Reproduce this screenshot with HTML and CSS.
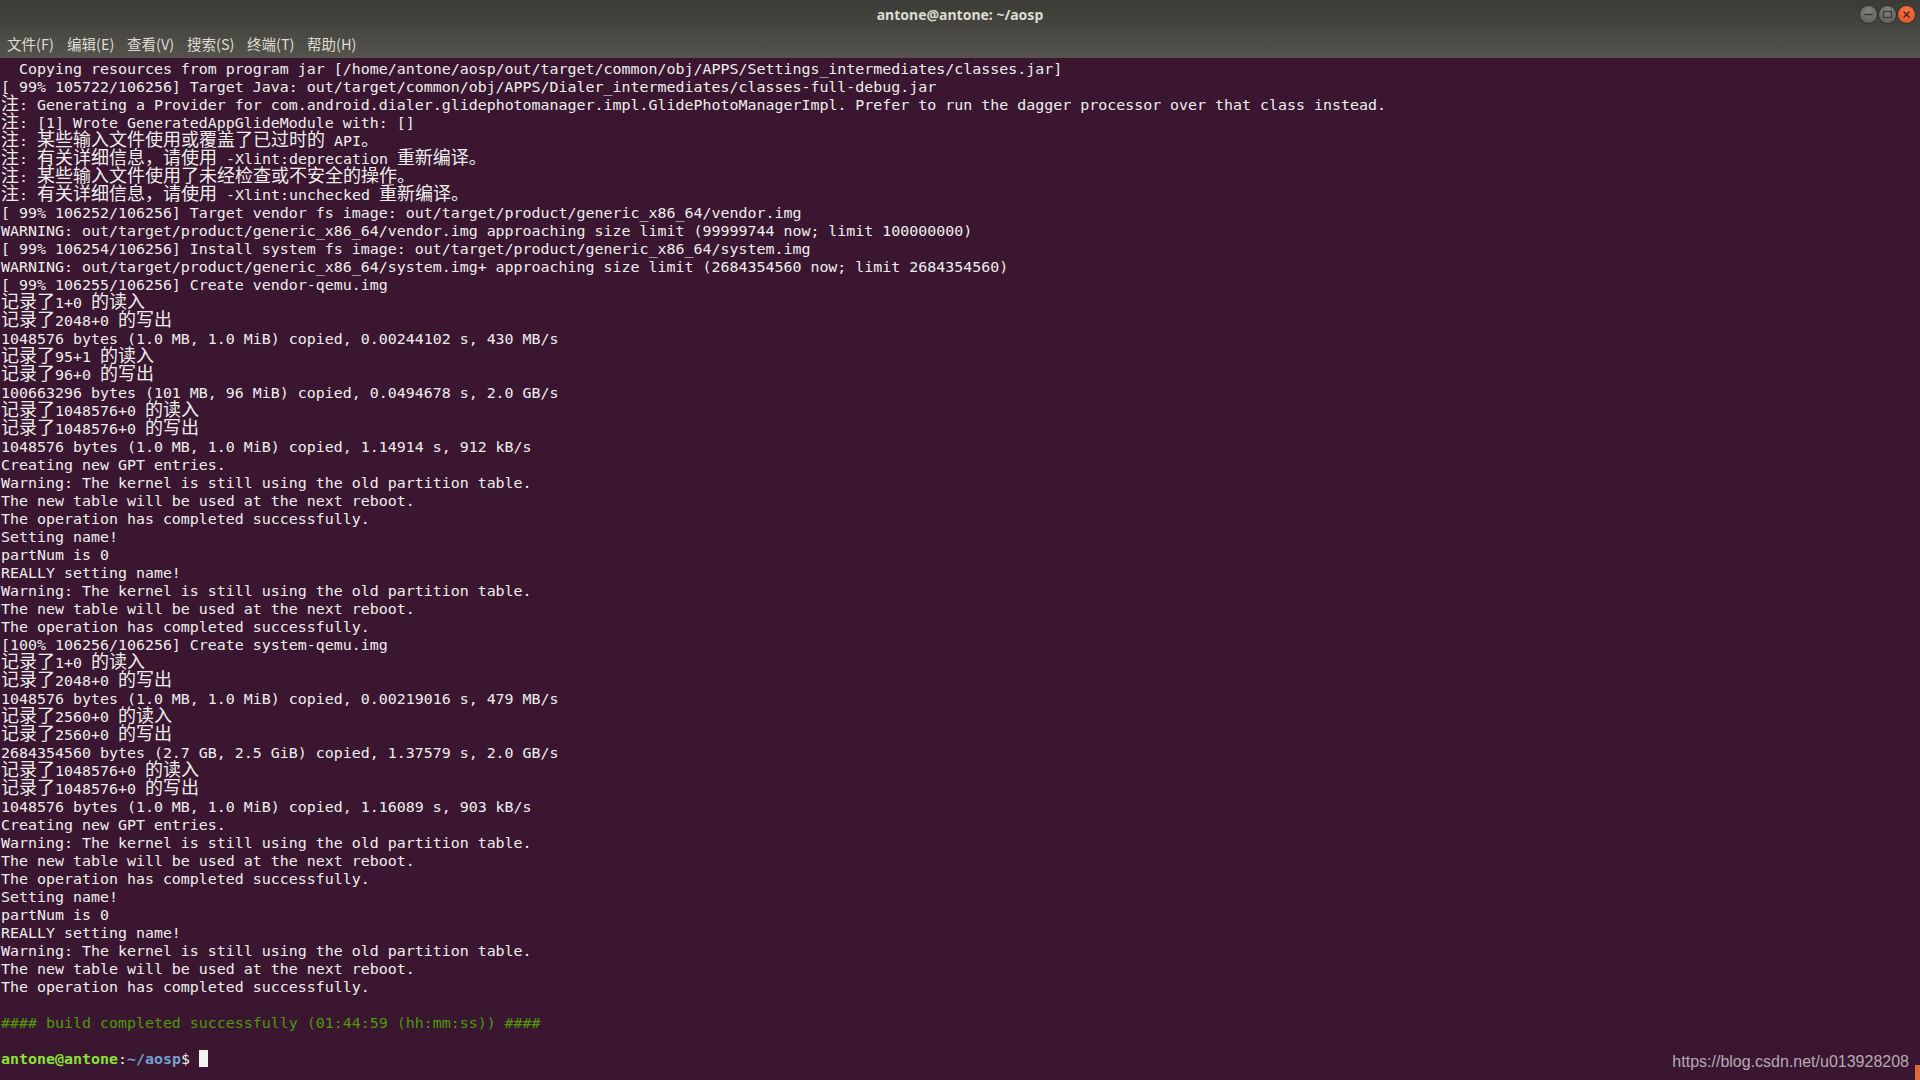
FILE: index.html
```html
<!DOCTYPE html>
<html lang="zh-CN">
<head>
    <meta charset="UTF-8">
    <meta name="viewport" content="width=device-width, initial-scale=1.0">
    <title>antone@antone: ~/aosp</title>
    <link rel="stylesheet" href="styles.css">
</head>
<body>
    <div class="window">
        <div class="chrome">
            <div class="titlebar">
                <div></div>
                <div class="title">antone@antone: ~/aosp</div>
                <div class="controls">
                    <span class="btn">
                        <svg width="17" height="17" viewBox="0 0 17 17"><path d="M4.5 8.5h8" stroke="#3a3935" stroke-width="1.4"/></svg>
                    </span>
                    <span class="btn">
                        <svg width="17" height="17" viewBox="0 0 17 17"><rect x="4.5" y="5.5" width="8" height="6" fill="none" stroke="#3a3935" stroke-width="1.2"/></svg>
                    </span>
                    <span class="btn close">
                        <svg width="17" height="17" viewBox="0 0 17 17"><path d="M5.5 5.5l6 6M11.5 5.5l-6 6" stroke="#3b2418" stroke-width="1.3"/></svg>
                    </span>
                </div>
            </div>
            <div class="menubar">
                <span class="menu">文件(F)</span>
                <span class="menu">编辑(E)</span>
                <span class="menu">查看(V)</span>
                <span class="menu">搜索(S)</span>
                <span class="menu">终端(T)</span>
                <span class="menu">帮助(H)</span>
            </div>
        </div>

        <div class="terminal">
            <div class="ln">  Copying resources from program jar [/home/antone/aosp/out/target/common/obj/APPS/Settings_intermediates/classes.jar]</div>
            <div class="ln">[ 99% 105722/106256] Target Java: out/target/common/obj/APPS/Dialer_intermediates/classes-full-debug.jar</div>
            <div class="ln"><span class="w">注</span>: Generating a Provider for com.android.dialer.glidephotomanager.impl.GlidePhotoManagerImpl. Prefer to run the dagger processor over that class instead.</div>
            <div class="ln"><span class="w">注</span>: [1] Wrote GeneratedAppGlideModule with: []</div>
            <div class="ln"><span class="w">注</span>: <span class="w">某些输入文件使用或覆盖了已过时的</span> API<span class="w">。</span></div>
            <div class="ln"><span class="w">注</span>: <span class="w">有关详细信息，请使用</span> -Xlint:deprecation <span class="w">重新编译。</span></div>
            <div class="ln"><span class="w">注</span>: <span class="w">某些输入文件使用了未经检查或不安全的操作。</span></div>
            <div class="ln"><span class="w">注</span>: <span class="w">有关详细信息，请使用</span> -Xlint:unchecked <span class="w">重新编译。</span></div>
            <div class="ln">[ 99% 106252/106256] Target vendor fs image: out/target/product/generic_x86_64/vendor.img</div>
            <div class="ln">WARNING: out/target/product/generic_x86_64/vendor.img approaching size limit (99999744 now; limit 100000000)</div>
            <div class="ln">[ 99% 106254/106256] Install system fs image: out/target/product/generic_x86_64/system.img</div>
            <div class="ln">WARNING: out/target/product/generic_x86_64/system.img+ approaching size limit (2684354560 now; limit 2684354560)</div>
            <div class="ln">[ 99% 106255/106256] Create vendor-qemu.img</div>
            <div class="ln"><span class="w">记录了</span>1+0 <span class="w">的读入</span></div>
            <div class="ln"><span class="w">记录了</span>2048+0 <span class="w">的写出</span></div>
            <div class="ln">1048576 bytes (1.0 MB, 1.0 MiB) copied, 0.00244102 s, 430 MB/s</div>
            <div class="ln"><span class="w">记录了</span>95+1 <span class="w">的读入</span></div>
            <div class="ln"><span class="w">记录了</span>96+0 <span class="w">的写出</span></div>
            <div class="ln">100663296 bytes (101 MB, 96 MiB) copied, 0.0494678 s, 2.0 GB/s</div>
            <div class="ln"><span class="w">记录了</span>1048576+0 <span class="w">的读入</span></div>
            <div class="ln"><span class="w">记录了</span>1048576+0 <span class="w">的写出</span></div>
            <div class="ln">1048576 bytes (1.0 MB, 1.0 MiB) copied, 1.14914 s, 912 kB/s</div>
            <div class="ln">Creating new GPT entries.</div>
            <div class="ln">Warning: The kernel is still using the old partition table.</div>
            <div class="ln">The new table will be used at the next reboot.</div>
            <div class="ln">The operation has completed successfully.</div>
            <div class="ln">Setting name!</div>
            <div class="ln">partNum is 0</div>
            <div class="ln">REALLY setting name!</div>
            <div class="ln">Warning: The kernel is still using the old partition table.</div>
            <div class="ln">The new table will be used at the next reboot.</div>
            <div class="ln">The operation has completed successfully.</div>
            <div class="ln">[100% 106256/106256] Create system-qemu.img</div>
            <div class="ln"><span class="w">记录了</span>1+0 <span class="w">的读入</span></div>
            <div class="ln"><span class="w">记录了</span>2048+0 <span class="w">的写出</span></div>
            <div class="ln">1048576 bytes (1.0 MB, 1.0 MiB) copied, 0.00219016 s, 479 MB/s</div>
            <div class="ln"><span class="w">记录了</span>2560+0 <span class="w">的读入</span></div>
            <div class="ln"><span class="w">记录了</span>2560+0 <span class="w">的写出</span></div>
            <div class="ln">2684354560 bytes (2.7 GB, 2.5 GiB) copied, 1.37579 s, 2.0 GB/s</div>
            <div class="ln"><span class="w">记录了</span>1048576+0 <span class="w">的读入</span></div>
            <div class="ln"><span class="w">记录了</span>1048576+0 <span class="w">的写出</span></div>
            <div class="ln">1048576 bytes (1.0 MB, 1.0 MiB) copied, 1.16089 s, 903 kB/s</div>
            <div class="ln">Creating new GPT entries.</div>
            <div class="ln">Warning: The kernel is still using the old partition table.</div>
            <div class="ln">The new table will be used at the next reboot.</div>
            <div class="ln">The operation has completed successfully.</div>
            <div class="ln">Setting name!</div>
            <div class="ln">partNum is 0</div>
            <div class="ln">REALLY setting name!</div>
            <div class="ln">Warning: The kernel is still using the old partition table.</div>
            <div class="ln">The new table will be used at the next reboot.</div>
            <div class="ln">The operation has completed successfully.</div>
            <div class="ln"></div>
            <div class="ln done">#### build completed successfully (01:44:59 (hh:mm:ss)) ####</div>
            <div class="ln"></div>
            <div class="ln"><span class="user">antone@antone</span>:<span class="path">~/aosp</span>$ <span class="cursor"> </span></div>

            <div class="watermark">https://blog.csdn.net/u013928208</div>
            <span class="corner"></span>
        </div>
    </div>
</body>
</html>
```

FILE: styles.css
```css
* {
    box-sizing: border-box;
    margin: 0;
    padding: 0;
}

body {
    width: 1920px;
    height: 1080px;
    overflow: hidden;
    background-color: #3a1631;
}

.window {
    display: flex;
    flex-direction: column;
    height: 100%;
}

/* title bar + menu share one gradient, like the Ambiance theme */
.chrome {
    background: linear-gradient(#3b3a36, #55534d);
    color: #dfdbd2;
    font-family: "Noto Sans CJK SC", "Noto Sans", sans-serif;
}

.titlebar {
    display: grid;
    grid-template-columns: 1fr auto 1fr;
    align-items: center;
    height: 29px;
}

.title {
    font-family: "Noto Sans", "Noto Sans CJK SC", sans-serif;
    font-weight: bold;
    font-size: 14px;
}

.controls {
    display: flex;
    justify-content: flex-end;
    gap: 2px;
    padding-right: 5px;
}

.btn {
    width: 17px;
    height: 17px;
    border-radius: 50%;
    background: radial-gradient(circle at 50% 30%, #807f7a, #5c5b56);
    box-shadow: 0 0 0 1px rgba(40, 39, 36, 0.6);
    display: flex;
}

.btn.close {
    background: radial-gradient(circle at 50% 30%, #f5774a, #de4e1c);
}

.menubar {
    display: flex;
    align-items: center;
    height: 29px;
    padding-left: 7px;
    font-size: 14.5px;
}

.menu {
    width: 60px;
    flex-shrink: 0;
}

.terminal {
    flex: 1;
    position: relative;
    padding: 2px 0 0 1px;
    background-color: #3a1631;
    color: #eeeeec;
    font-family: "DejaVu Sans Mono", "Liberation Mono", monospace;
    font-size: 14.95px;
}

.ln {
    height: 18px;
    line-height: 18px;
    white-space: pre;
}

/* wide (CJK) chars take two cells; line-height 0 keeps the baseline put */
.w {
    font-family: "Noto Sans CJK SC", sans-serif;
    font-size: 18px;
    line-height: 0;
}

.done {
    color: #4e9a06;
}

.user {
    color: #8ae234;
    font-weight: bold;
}

.path {
    color: #729fcf;
    font-weight: bold;
}

.cursor {
    display: inline-block;
    width: 9px;
    height: 17px;
    vertical-align: top;
    background-color: #f2f2f0;
}

.watermark {
    position: absolute;
    right: 11px;
    bottom: 9px;
    font-family: "Liberation Sans", Arial, sans-serif;
    font-size: 16px;
    color: #b7aab4;
}

.corner {
    position: absolute;
    right: 0;
    bottom: 0;
    width: 5px;
    height: 15px;
    background-color: #dd6a3a;
}
```
